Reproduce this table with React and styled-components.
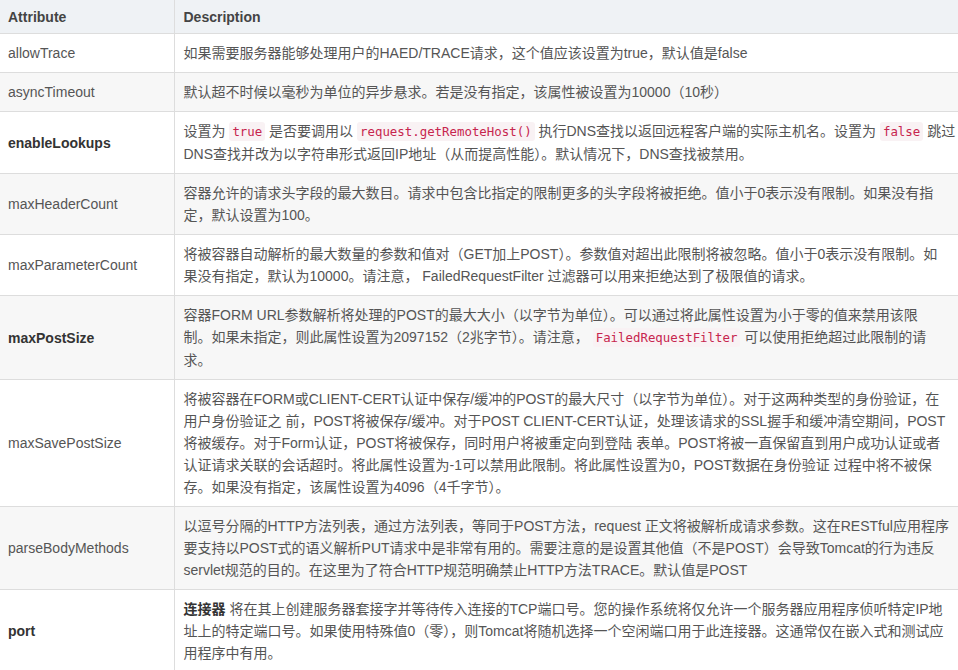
import React from "react";
import styled, { createGlobalStyle } from "styled-components";

const GlobalStyle = createGlobalStyle`
  body {
    margin: 0;
    background: #fff;
    font-family: "Liberation Sans", Arial, "Noto Sans CJK SC", sans-serif;
  }
`;

const Table = styled.table`
  width: 958px;
  table-layout: fixed;
  border-collapse: collapse;
  font-size: 14px;
  line-height: 22px;
  color: #555;
`;

const NameCol = styled.col`
  width: 174px;
`;

const HeadCell = styled.th`
  text-align: left;
  font-weight: bold;
  color: #444;
  background: #eff2f5;
  padding: 6px 8px 5px ${p => (p.$first ? "8px" : "9px")};
  border-left: ${p => (p.$first ? "none" : "1px solid #ddd")};
`;

const Row = styled.tr`
  border-top: 1px solid #ddd;
  background: ${p => (p.$striped ? "#f7f7f7" : "#fff")};
`;

const NameCell = styled.td`
  padding: 8px;
  vertical-align: middle;
  font-weight: ${p => (p.$bold ? "bold" : "normal")};
  color: ${p => (p.$bold ? "#333" : "#555")};
`;

const DescCell = styled.td`
  padding: 8px 8px 8px 9px;
  border-left: 1px solid #ddd;
  vertical-align: top;
`;

const Line = styled.span`
  display: block;
  white-space: nowrap;
`;

const Code = styled.code`
  font-family: "DejaVu Sans Mono", "Liberation Mono", monospace;
  font-size: 12.4px;
  color: #c7254e;
  background: #f9f2f4;
  padding: 2px 3px;
  border-radius: 3px;
`;

const Strong = styled.b`
  color: #333;
`;

const rows = [
  {
    name: "allowTrace",
    lines: [["如果需要服务器能够处理用户的HAED/TRACE请求，这个值应该设置为true，默认值是false"]],
  },
  {
    name: "asyncTimeout",
    lines: [["默认超不时候以毫秒为单位的异步悬求。若是没有指定，该属性被设置为10000（10秒）"]],
  },
  {
    name: "enableLookups",
    bold: true,
    lines: [
      [
        "设置为 ",
        { code: "true" },
        " 是否要调用以 ",
        { code: "request.getRemoteHost()" },
        " 执行DNS查找以返回远程客户端的实际主机名。设置为 ",
        { code: "false" },
        " 跳过",
      ],
      ["DNS查找并改为以字符串形式返回IP地址（从而提高性能）。默认情况下，DNS查找被禁用。"],
    ],
  },
  {
    name: "maxHeaderCount",
    lines: [
      ["容器允许的请求头字段的最大数目。请求中包含比指定的限制更多的头字段将被拒绝。值小于0表示没有限制。如果没有指"],
      ["定，默认设置为100。"],
    ],
  },
  {
    name: "maxParameterCount",
    lines: [
      ["将被容器自动解析的最大数量的参数和值对（GET加上POST）。参数值对超出此限制将被忽略。值小于0表示没有限制。如"],
      ["果没有指定，默认为10000。请注意， FailedRequestFilter 过滤器可以用来拒绝达到了极限值的请求。"],
    ],
  },
  {
    name: "maxPostSize",
    bold: true,
    lines: [
      ["容器FORM URL参数解析将处理的POST的最大大小（以字节为单位）。可以通过将此属性设置为小于零的值来禁用该限"],
      ["制。如果未指定，则此属性设置为2097152（2兆字节）。请注意， ", { code: "FailedRequestFilter" }, " 可以使用拒绝超过此限制的请"],
      ["求。"],
    ],
  },
  {
    name: "maxSavePostSize",
    lines: [
      ["将被容器在FORM或CLIENT-CERT认证中保存/缓冲的POST的最大尺寸（以字节为单位）。对于这两种类型的身份验证，在"],
      ["用户身份验证之 前，POST将被保存/缓冲。对于POST CLIENT-CERT认证，处理该请求的SSL握手和缓冲清空期间，POST"],
      ["将被缓存。对于Form认证，POST将被保存，同时用户将被重定向到登陆 表单。POST将被一直保留直到用户成功认证或者"],
      ["认证请求关联的会话超时。将此属性设置为-1可以禁用此限制。将此属性设置为0，POST数据在身份验证 过程中将不被保"],
      ["存。如果没有指定，该属性设置为4096（4千字节）。"],
    ],
  },
  {
    name: "parseBodyMethods",
    lines: [
      ["以逗号分隔的HTTP方法列表，通过方法列表，等同于POST方法，request 正文将被解析成请求参数。这在RESTful应用程序"],
      ["要支持以POST式的语义解析PUT请求中是非常有用的。需要注意的是设置其他值（不是POST）会导致Tomcat的行为违反"],
      ["servlet规范的目的。在这里为了符合HTTP规范明确禁止HTTP方法TRACE。默认值是POST"],
    ],
  },
  {
    name: "port",
    bold: true,
    lines: [
      [{ strong: "连接器" }, " 将在其上创建服务器套接字并等待传入连接的TCP端口号。您的操作系统将仅允许一个服务器应用程序侦听特定IP地"],
      ["址上的特定端口号。如果使用特殊值0（零），则Tomcat将随机选择一个空闲端口用于此连接器。这通常仅在嵌入式和测试应"],
      ["用程序中有用。"],
    ],
  },
];

const renderPart = (part, i) => {
  if (typeof part === "string") return part;
  if (part.code) return <Code key={i}>{part.code}</Code>;
  return <Strong key={i}>{part.strong}</Strong>;
};

export default function App() {
  return (
    <>
      <GlobalStyle />
      <Table>
        <colgroup>
          <NameCol />
          <col />
        </colgroup>
        <thead>
          <tr>
            <HeadCell $first>Attribute</HeadCell>
            <HeadCell>Description</HeadCell>
          </tr>
        </thead>
        <tbody>
          {rows.map((row, idx) => (
            <Row key={row.name} $striped={idx % 2 === 1}>
              <NameCell $bold={row.bold}>{row.name}</NameCell>
              <DescCell>
                {row.lines.map((line, li) => (
                  <Line key={li}>{line.map(renderPart)}</Line>
                ))}
              </DescCell>
            </Row>
          ))}
        </tbody>
      </Table>
    </>
  );
}
